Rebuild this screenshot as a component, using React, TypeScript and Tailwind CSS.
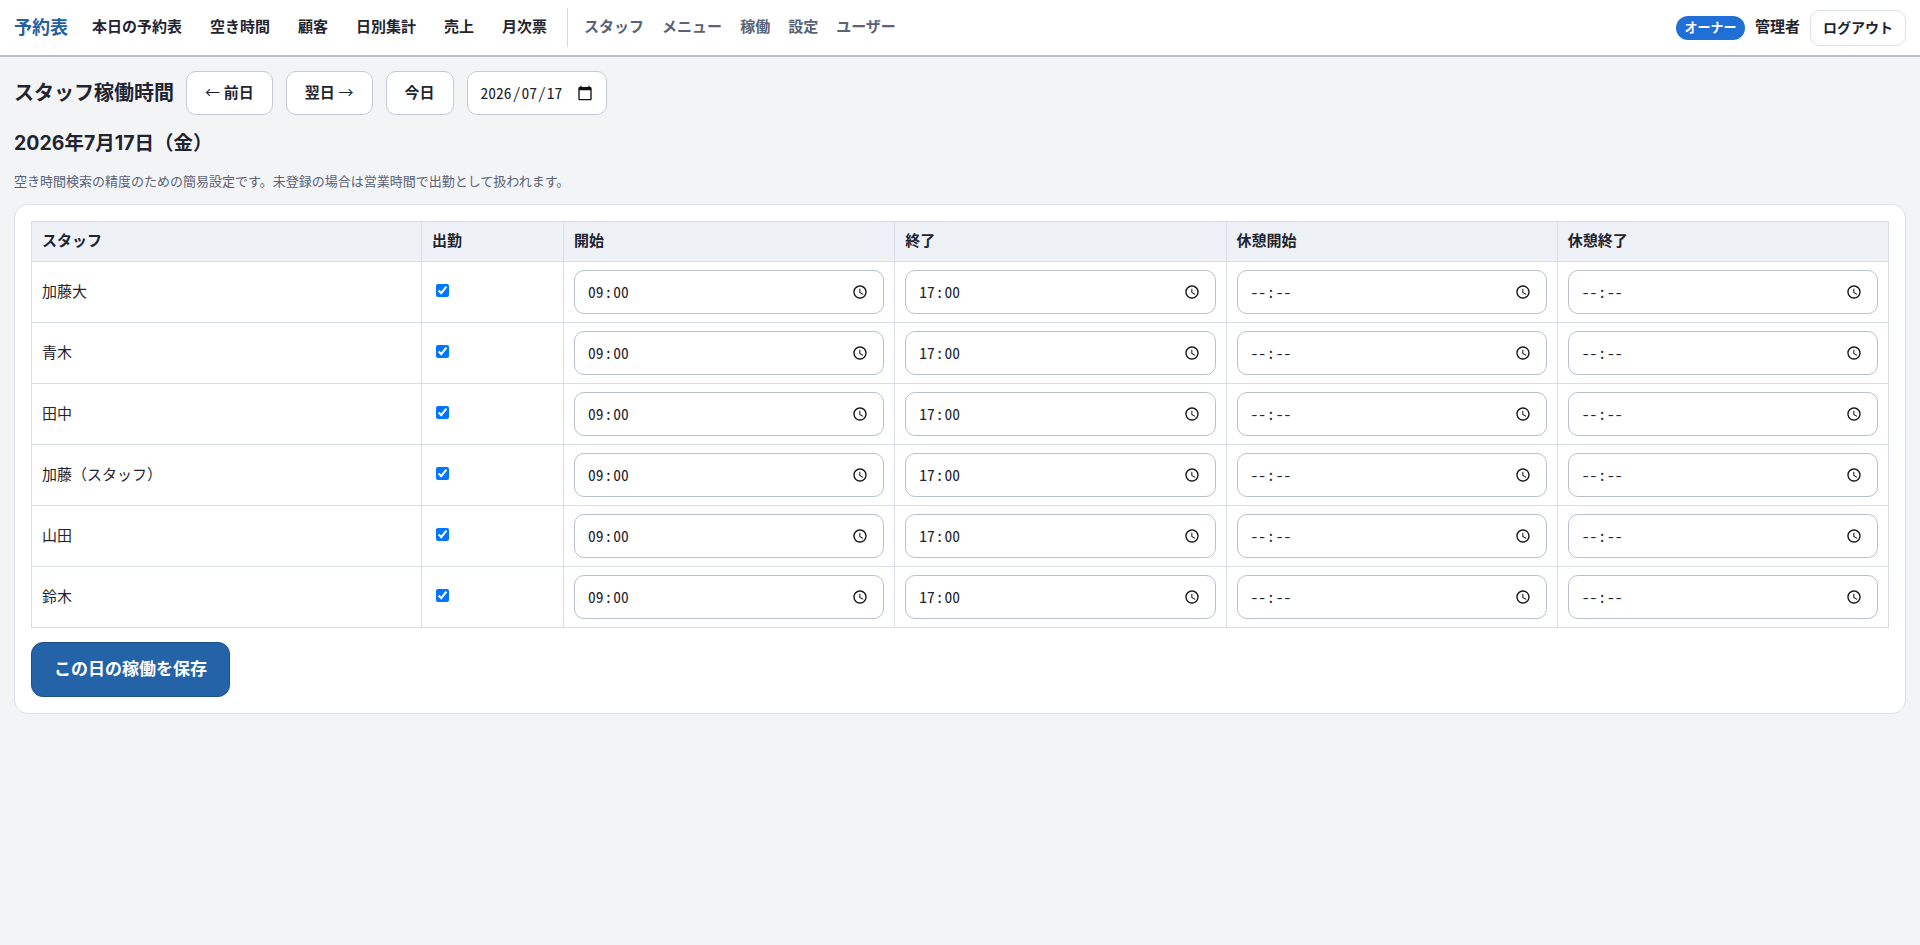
import React from 'react';

const primaryNav = ['本日の予約表', '空き時間', '顧客', '日別集計', '売上', '月次票'];
const secondaryNav = ['スタッフ', 'メニュー', '稼働', '設定', 'ユーザー'];
const staff = ['加藤大', '青木', '田中', '加藤（スタッフ）', '山田', '鈴木'];
const headers = ['スタッフ', '出勤', '開始', '終了', '休憩開始', '休憩終了'];

const ClockIcon = () => (
  <svg viewBox="0 0 24 24" className="w-[16px] h-[16px] shrink-0" fill="#111">
    <path d="M11.99 2C6.47 2 2 6.48 2 12s4.47 10 9.99 10C17.52 22 22 17.52 22 12S17.52 2 11.99 2zM12 20c-4.42 0-8-3.58-8-8s3.58-8 8-8 8 3.58 8 8-3.58 8-8 8zm.5-13H11v6l5.25 3.15.75-1.23-4.5-2.67z" />
  </svg>
);

const CalendarIcon = () => (
  <svg viewBox="0 0 24 24" className="w-[16px] h-[16px] shrink-0" fill="#111">
    <path d="M20 3h-1V1h-2v2H7V1H5v2H4c-1.1 0-2 .9-2 2v16c0 1.1.9 2 2 2h16c1.1 0 2-.9 2-2V5c0-1.1-.9-2-2-2zm0 18H4V8h16v13z" />
  </svg>
);

// same look as the browser's date/time edit: fields with 1px padding, separators between
const EditFields: React.FC<{ parts: string[]; sep: string }> = ({ parts, sep }) => (
  <div className="flex-1 min-w-0 flex items-center text-[15.5px] text-[#1f2430] font-['Noto_Sans_Mono_CJK_JP','Noto_Sans_CJK_JP',monospace]">
    {parts.map((part, i) => (
      <React.Fragment key={i}>
        {i > 0 && <span>{sep}</span>}
        <span className="px-px">{part}</span>
      </React.Fragment>
    ))}
  </div>
);

const TimeInput: React.FC<{ value?: string }> = ({ value = '--:--' }) => (
  <div className="w-full h-[44px] pl-[12px] pr-[15px] bg-white border border-[#b8c0d0] rounded-[10px] flex items-center">
    <EditFields parts={value.split(':')} sep=":" />
    <ClockIcon />
  </div>
);

const NavButton: React.FC<{ children: React.ReactNode }> = ({ children }) => (
  <button className="h-[44px] px-[18px] bg-white border border-[#c3c9d6] rounded-[10px] text-[15px] font-semibold text-[#1f2430]">
    {children}
  </button>
);

const Arrow: React.FC<{ children: string }> = ({ children }) => (
  <span className="font-['Noto_Sans_CJK_JP'] font-normal">{children}</span>
);

export default function App() {
  return (
    <div lang="ja" className="min-h-[945px] bg-[#f3f4f6] text-[#1f2430] font-['Inter','Noto_Sans_CJK_JP',sans-serif]">
      <header className="h-[57px] bg-white border-b-2 border-[#b8c0d0] px-[14px] flex items-center">
        <div className="text-[18px] font-bold text-[#245f9e] mr-[10px]">予約表</div>
        <nav className="flex items-center">
          {primaryNav.map(label => (
            <a key={label} className="px-[14px] text-[15px] font-semibold text-[#1f2430]">{label}</a>
          ))}
        </nav>
        <div className="w-px h-[39px] bg-[#d5d9e3] ml-[6px] mr-[7px]" />
        <nav className="flex items-center">
          {secondaryNav.map(label => (
            <a key={label} className="px-[9px] text-[15px] font-semibold text-[#5a6276]">{label}</a>
          ))}
        </nav>
        <div className="ml-auto flex items-center gap-[10px]">
          <span className="h-[24px] px-[8.5px] rounded-full bg-[#1f6fd6] text-white text-[13px] font-bold flex items-center">オーナー</span>
          <span className="text-[15px] font-semibold">管理者</span>
          <button className="h-[36px] px-[12px] bg-white border border-[#dde1ea] rounded-[10px] text-[14px] font-semibold">ログアウト</button>
        </div>
      </header>

      <main className="p-[14px]">
        <div className="flex items-center gap-[13px]">
          <h1 className="text-[20px] font-bold leading-[30px] mr-[-1px]">スタッフ稼働時間</h1>
          <NavButton><Arrow>←</Arrow> 前日</NavButton>
          <NavButton>翌日 <Arrow>→</Arrow></NavButton>
          <NavButton>今日</NavButton>
          <div className="w-[140px] h-[44px] pl-[12px] pr-[13px] bg-white border border-[#c3c9d6] rounded-[10px] flex items-center">
            <EditFields parts={['2026', '07', '17']} sep="/" />
            <CalendarIcon />
          </div>
        </div>
        <h2 className="mt-[15px] text-[19.5px] font-bold leading-[27px]">2026年7月17日（金）</h2>
        <p className="mt-[14px] text-[13px] leading-[20px] text-[#5a6276]">
          空き時間検索の精度のための簡易設定です。未登録の場合は営業時間で出勤として扱われます。
        </p>

        <section className="mt-[13px] bg-white border border-[#dde1ea] rounded-[14px] p-[16px]">
          <table className="w-full table-fixed border-collapse text-[15px]">
            <colgroup>
              <col className="w-[390px]" />
              <col className="w-[142px]" />
              <col />
              <col />
              <col />
              <col />
            </colgroup>
            <thead>
              <tr>
                {headers.map(h => (
                  <th key={h} className="h-[40px] px-[10px] text-left font-bold bg-[#eef1f6] border border-[#d8dce6]">{h}</th>
                ))}
              </tr>
            </thead>
            <tbody>
              {staff.map(name => (
                <tr key={name}>
                  <td className="h-[61px] px-[10px] border border-[#d8dce6]">{name}</td>
                  <td className="px-[10px] border border-[#d8dce6]">
                    <input type="checkbox" defaultChecked className="block w-[13px] h-[13px] mb-[4px] ml-[4px] accent-[#0075ff]" />
                  </td>
                  <td className="px-[10px] border border-[#d8dce6]"><TimeInput value="09:00" /></td>
                  <td className="px-[10px] border border-[#d8dce6]"><TimeInput value="17:00" /></td>
                  <td className="px-[10px] border border-[#d8dce6]"><TimeInput /></td>
                  <td className="px-[10px] border border-[#d8dce6]"><TimeInput /></td>
                </tr>
              ))}
            </tbody>
          </table>
          <button className="mt-[14px] block h-[55px] px-[22px] bg-[#2563a8] border border-[#1e4f8a] rounded-[12px] text-[17px] font-bold text-white">
            この日の稼働を保存
          </button>
        </section>
      </main>
    </div>
  );
}
